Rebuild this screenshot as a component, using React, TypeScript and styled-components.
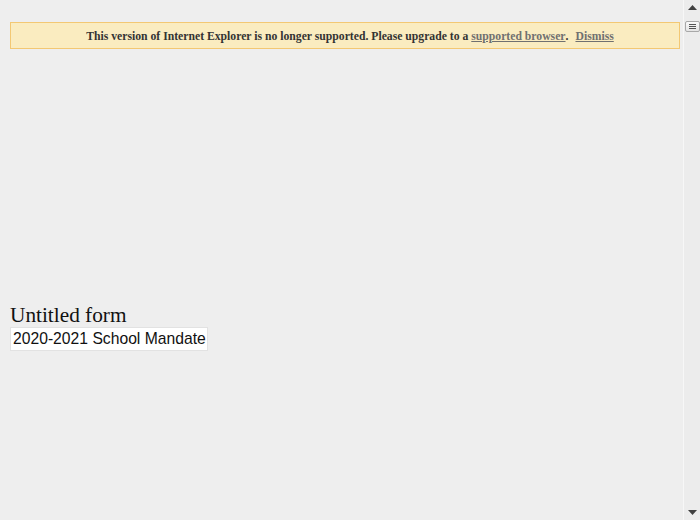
import React from "react";
import styled, { createGlobalStyle } from "styled-components";

const Global = createGlobalStyle`
  html, body { margin: 0; padding: 0; background: #eeeeee; }
  body { width: 700px; height: 520px; overflow: hidden; }
`;

const Page = styled.div`
  display: flex;
  flex-direction: row;
  width: 700px;
  height: 520px;
  background: #eeeeee;
`;

const Main = styled.div`
  flex: 1;
  display: flex;
  flex-direction: column;
  padding: 22px 3px 0 10px;
  min-width: 0;
`;

const Banner = styled.div`
  box-sizing: border-box;
  height: 27px;
  background: #faecc0;
  border: 1px solid #f3c873;
  display: flex;
  align-items: center;
  justify-content: center;
  padding: 2px 0 0 10px;
  font-family: "Liberation Serif", "Times New Roman", serif;
  font-weight: bold;
  font-size: 11.7px;
  color: #333333;
  white-space: nowrap;
`;

const BannerLink = styled.a`
  color: #707070;
  text-decoration: underline;
  cursor: pointer;
`;

const Gap = styled.span`
  display: inline-block;
  width: 7px;
`;

const FormHeader = styled.div`
  margin-top: 254px;
  display: flex;
  flex-direction: column;
  align-items: flex-start;
`;

const Title = styled.div`
  font-family: "Liberation Serif", "Times New Roman", serif;
  font-size: 21.3px;
  line-height: 24px;
  color: #111111;
`;

const TitleInput = styled.input`
  box-sizing: border-box;
  width: 198px;
  height: 24px;
  margin: 0;
  padding: 0 1px 0 2px;
  border: 1px solid #e2e2e2;
  background: #ffffff;
  font-family: "Liberation Sans", Arial, sans-serif;
  font-size: 15.7px;
  color: #111111;
  outline: none;
`;

const Scrollbar = styled.div`
  width: 16px;
  height: 520px;
  border-left: 1px solid #f7f7f7;
  background: #ececec;
  display: flex;
  flex-direction: column;
  align-items: center;
`;

const Arrow = styled.div`
  height: 15px;
  width: 16px;
  display: flex;
  align-items: center;
  justify-content: center;
`;

const Thumb = styled.div`
  box-sizing: border-box;
  margin-top: 6px;
  width: 15px;
  height: 11px;
  border: 1px solid #a8a8a8;
  border-radius: 2px;
  background: linear-gradient(#fafafa, #e4e4e4);
  display: flex;
  align-items: center;
  justify-content: center;
`;

const Track = styled.div`
  flex: 1;
`;

function Triangle({ down }: { down?: boolean }) {
  return (
    <svg width="9" height="5" viewBox="0 0 9 5">
      {down ? (
        <path d="M0 0 H9 L4.5 5 Z" fill="#404040" />
      ) : (
        <path d="M0 5 H9 L4.5 0 Z" fill="#404040" />
      )}
    </svg>
  );
}

function Grip() {
  return (
    <svg width="7" height="5" viewBox="0 0 7 5">
      <path d="M0 0.5 H7 M0 2.5 H7 M0 4.5 H7" stroke="#555" strokeWidth="1" />
    </svg>
  );
}

export default function App() {
  return (
    <>
      <Global />
      <Page>
        <Main>
          <Banner>
            This version of Internet Explorer is no longer supported. Please upgrade to a&nbsp;
            <BannerLink>supported browser</BannerLink>.<Gap />
            <BannerLink>Dismiss</BannerLink>
          </Banner>
          <FormHeader>
            <Title>Untitled form</Title>
            <TitleInput defaultValue="2020-2021 School Mandate" />
          </FormHeader>
        </Main>
        <Scrollbar>
          <Arrow>
            <Triangle />
          </Arrow>
          <Thumb>
            <Grip />
          </Thumb>
          <Track />
          <Arrow>
            <Triangle down />
          </Arrow>
        </Scrollbar>
      </Page>
    </>
  );
}
